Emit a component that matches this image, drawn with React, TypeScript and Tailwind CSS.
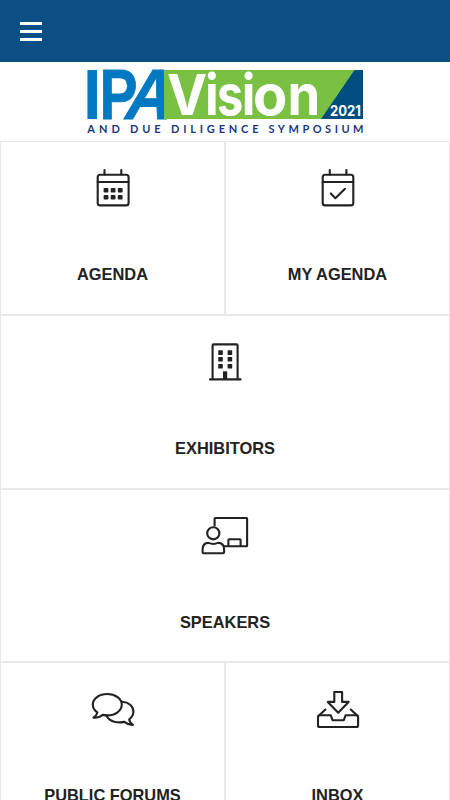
import type { ReactNode } from "react"

type Tile = {
    label: string
    icon: ReactNode
    wide?: boolean
}

function Icon({ children }: { children: ReactNode }) {
    return (
        <svg
            viewBox="0 0 56 48"
            className="w-14 h-12 shrink-0 text-[#222222]"
            fill="none"
            stroke="currentColor"
            strokeWidth="2.1"
            strokeLinecap="round"
            strokeLinejoin="round"
        >
            {children}
        </svg>
    )
}

const AgendaIcon = () => (
    <Icon>
        <rect x="12.7" y="10.8" width="30.9" height="30.6" rx="2.5" />
        <path d="M12.7 18H43.6M19.5 6V10.4M36.3 6V10.4" />
        <g fill="currentColor" stroke="none">
            {[24, 31].map((y) =>
                [18.6, 25.7, 32.8].map((x) => <rect key={`${x}-${y}`} x={x} y={y} width="4.8" height="4.6" rx="0.8" />)
            )}
        </g>
    </Icon>
)

const MyAgendaIcon = () => (
    <Icon>
        <rect x="12.7" y="10.8" width="30.6" height="30.6" rx="2.5" />
        <path d="M12.7 18H43.3M19.8 6V10.4M36.4 6V10.4" />
        <path d="M20.8 29.4 25.4 34.2 35 24.8" />
    </Icon>
)

const ExhibitorsIcon = () => (
    <Icon>
        <path d="M15.6 41V7.4Q15.6 6.4 16.6 6.4H39.6Q40.6 6.4 40.6 7.4V41M13 41.4H43.6" />
        <g fill="currentColor" stroke="none">
            {[12.3, 19, 25.9].map((y) =>
                [21.2, 30.6].map((x) => <rect key={`${x}-${y}`} x={x} y={y} width="4.6" height="4.6" rx="0.6" />)
            )}
            <rect x="26" y="33.3" width="4.2" height="8.5" />
        </g>
    </Icon>
)

const SpeakersIcon = () => (
    <Icon>
        <path d="M17.6 13.5V6.8Q17.6 6 18.4 6H49.3Q50.1 6 50.1 6.8V33.4Q50.1 34.2 49.3 34.2H27.5" />
        <path d="M31.4 34V28Q31.4 27.3 32.1 27.3H42.9Q43.6 27.3 43.6 28V34" />
        <circle cx="16.3" cy="21.3" r="6.1" />
        <path d="M5.6 40.2V37.5Q5.6 30.9 11.5 30.9Q16.3 33 21.1 30.9Q27.1 30.9 27.1 37.5V40.2Q27.1 41.2 26.1 41.2H6.6Q5.6 41.2 5.6 40.2Z" />
    </Icon>
)

const ForumsIcon = () => (
    <Icon>
        <path d="M12.4 27.4C9.3 25.4 7.8 22.7 7.8 19.5C7.8 13.6 14.2 9 22.3 9C30.3 9 36.8 13.6 36.8 19.6C36.8 25.8 30.3 30.4 22.3 30.4C20.7 30.4 19.2 30.2 17.8 29.9C15.5 31.8 12.1 33.1 8.4 32.6C10.8 31.1 12 29.4 12.4 27.4Z" />
        <path d="M37.3 16.7C43.6 17 48.4 21.3 48.4 26.8C48.4 29.8 46.9 32.3 44.2 34.3C44.3 36.6 45.9 38.4 48.1 39.8C44.9 40 41.9 39 39.3 36.9C32.5 38.3 24.8 36.6 21.9 31.5" />
    </Icon>
)

const InboxIcon = () => (
    <Icon>
        <path d="M24.3 7H32.1V16.9H38.6L28.2 27.7L17.8 16.9H24.3Z" />
        <path d="M15.4 24.5 9 30.5M40.8 24.5 47.2 30.5" />
        <path d="M9.8 30.3H20.8L22.5 35.2H33.8L35.6 30.3H46.3Q48.1 30.3 48.1 32.1V40.2Q48.1 42 46.3 42H9.8Q8 42 8 40.2V32.1Q8 30.3 9.8 30.3Z" />
    </Icon>
)

const tiles: Tile[] = [
    { label: "AGENDA", icon: <AgendaIcon /> },
    { label: "MY AGENDA", icon: <MyAgendaIcon /> },
    { label: "EXHIBITORS", icon: <ExhibitorsIcon />, wide: true },
    { label: "SPEAKERS", icon: <SpeakersIcon />, wide: true },
    { label: "PUBLIC FORUMS", icon: <ForumsIcon /> },
    { label: "INBOX", icon: <InboxIcon /> },
]

const tagline = [
    { word: "AND", x: 1.3, width: 32.5 },
    { word: "DUE", x: 44, width: 30.5 },
    { word: "DILIGENCE", x: 85, width: 87.5 },
    { word: "SYMPOSIUM", x: 182.5, width: 95 },
]

function Logo() {
    return (
        <svg viewBox="0 0 278 66" className="w-[278px] h-[66px] overflow-visible" role="img" aria-label="IPA Vision 2021">
            <g fill="#0079c2" className="font-['Liberation_Sans'] font-bold" fontSize="71.2">
                <text transform="translate(-3 49) scale(0.93 1)">I</text>
                <text transform="translate(13.4 49) scale(0.8 1)" stroke="#0079c2" strokeWidth="0.8">P</text>
                <text transform="translate(36 49) skewX(-15) scale(0.9 1)" stroke="#0079c2" strokeWidth="0.8">A</text>
            </g>
            {/* green panel trims the right leg of the A to a straight edge */}
            <rect x="78" y="0" width="199" height="49" fill="#79c043" />
            <path d="M268.5 0H277V49H235Z" fill="#004e80" />
            <g fill="#ffffff" className="font-['Inter'] font-bold" fontSize="56">
                <text transform="translate(81 44.6) scale(0.96 1)">V</text>
                <text transform="translate(119 44.6) scale(0.9 1)">i</text>
                <text transform="translate(131 44.6) scale(0.84 1)">s</text>
                <text transform="translate(155.8 44.6) scale(0.9 1)">i</text>
                <text transform="translate(167 44.6) scale(1 1)">o</text>
                <text transform="translate(201.6 44.6) scale(0.94 1)">n</text>
            </g>
            <text x="244" y="45.6" textLength="31" lengthAdjust="spacingAndGlyphs" fill="#ffffff" fontSize="14.5" className="font-['Inter'] font-bold">
                2021
            </text>
            <g fill="#17397b" fontSize="11" className="font-['Lato'] font-bold">
                {tagline.map(({ word, x, width }) => (
                    <text key={word} x={x} y="63" textLength={width}>
                        {word}
                    </text>
                ))}
            </g>
        </svg>
    )
}

export default function App() {
    return (
        <div className="h-[800px] w-full overflow-hidden bg-white font-['Liberation_Sans',sans-serif]">
            <header className="flex h-[62px] items-center bg-[#0b4f84] px-5">
                <button aria-label="Menu" className="flex flex-col gap-[5px]">
                    <span className="h-[3px] w-[22px] bg-white" />
                    <span className="h-[3px] w-[22px] bg-white" />
                    <span className="h-[3px] w-[22px] bg-white" />
                </button>
            </header>
            <div className="flex h-[79.3px] justify-center pt-2">
                <Logo />
            </div>
            <main className="grid auto-rows-[173.67px] grid-cols-2">
                {tiles.map((tile) => (
                    <section
                        key={tile.label}
                        className={`flex flex-col items-center border border-[#e9e9e9] pt-[22px] ${tile.wide ? "col-span-2" : ""}`}
                    >
                        {tile.icon}
                        <h2 className="mt-[50px] text-[16.4px] leading-6 font-bold text-[#222222]">{tile.label}</h2>
                    </section>
                ))}
            </main>
        </div>
    )
}
